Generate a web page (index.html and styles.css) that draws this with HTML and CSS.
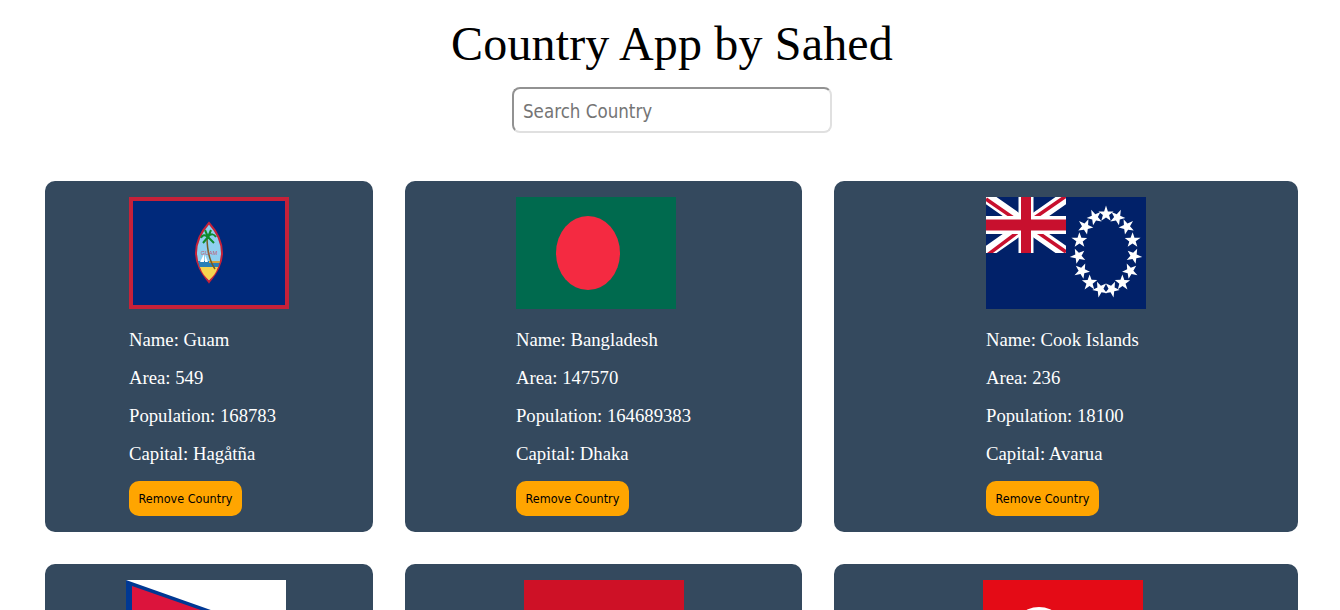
FILE: index.html
```html
<!DOCTYPE html>
<html lang="en">
<head>
  <meta charset="UTF-8" />
  <title>Country App by Sahed</title>
  <meta name="viewport" content="width=device-width, initial-scale=1.0" />
  <link rel="stylesheet" href="styles.css">
</head>
<body>
  <div class="header">
    <h1>Country App by Sahed</h1>
    <input type="text" placeholder="Search Country" />
  </div>

  <div class="countries">
    <div class="card">
      <div class="info">
        <svg class="flag" viewBox="0 0 160 112">
          <rect width="160" height="112" fill="#c62139"/>
          <rect x="4" y="4" width="152" height="104" fill="#00297b"/>
          <g transform="translate(1 0)">
            <path d="M79 26 C 70 36 66 46 66 56 C 66 67 72 76 79 85 C 86 76 92 67 92 56 C 92 46 88 36 79 26 Z" fill="#8fd0f0" stroke="#c62139" stroke-width="2"/>
            <path d="M70 70 H88 C 86 76 83 80 79 83 C 75 80 72 76 70 70 Z" fill="#f6d44f"/>
            <path d="M68 64 H90 L88.500 70 H69.500 Z" fill="#2a80b8"/>
            <path d="M79 64 H90 L89.500 66 H79 Z" fill="#d8a03a"/>
            <path d="M77 39 C 77 50 78 62 85 72" fill="none" stroke="#7a5a20" stroke-width="1.500"/>
            <path d="M78 40 C 75 37 72 38 71 41 M78 40 C 81 36 84 37 86 40 M78 40 L75 33 M78 40 L81 33 M78 40 L73 46 M78 40 L84 46" fill="none" stroke="#108a2c" stroke-width="2"/>
            <path d="M74 57 V65 H70 Z M75 58 L78 65 H75 Z" fill="#fff"/>
            <text x="79" y="58" class="seal-text">GUAM</text>
          </g>
        </svg>
        <p>Name: Guam</p>
        <p>Area: 549</p>
        <p>Population: 168783</p>
        <p>Capital: Hagåtña</p>
        <button>Remove Country</button>
      </div>
    </div>

    <div class="card">
      <div class="info">
        <svg class="flag" viewBox="0 0 160 112">
          <rect width="160" height="112" fill="#006a4e"/>
          <ellipse cx="72" cy="56" rx="32" ry="37" fill="#f42a41"/>
        </svg>
        <p>Name: Bangladesh</p>
        <p>Area: 147570</p>
        <p>Population: 164689383</p>
        <p>Capital: Dhaka</p>
        <button>Remove Country</button>
      </div>
    </div>

    <div class="card">
      <div class="info">
        <svg class="flag" viewBox="0 0 160 112">
          <defs>
            <polygon id="star" points="0,-8.400 1.900,-2.600 7.600,-2.500 3.100,1.100 4.700,6.700 0,3.500 -4.700,6.700 -3.100,1.100 -7.600,-2.500 -1.900,-2.600"/>
          </defs>
          <rect width="160" height="112" fill="#012169"/>
          <svg width="80" height="56">
            <path d="M0 0 L80 56 M80 0 L0 56" stroke="#fff" stroke-width="12"/>
            <path d="M0 2 L36 27 M80 -1 L44 24 M0 59 L36 32 M80 55 L44 30" stroke="#c8102e" stroke-width="3.500"/>
            <path d="M40 0 V56" stroke="#fff" stroke-width="15"/>
            <path d="M0 28 H80" stroke="#fff" stroke-width="18"/>
            <path d="M40 0 V56" stroke="#c8102e" stroke-width="10"/>
            <path d="M0 28 H80" stroke="#c8102e" stroke-width="11"/>
          </svg>
          <g fill="#fff">
            <use href="#star" transform="translate(120 17)"/>
            <use href="#star" transform="translate(131.400 20.300) rotate(24)"/>
            <use href="#star" transform="translate(140.800 29.600) rotate(48)"/>
            <use href="#star" transform="translate(146.600 43.300) rotate(72)"/>
            <use href="#star" transform="translate(147.900 59) rotate(96)"/>
            <use href="#star" transform="translate(144.200 74) rotate(120)"/>
            <use href="#star" transform="translate(136.500 85.700) rotate(144)"/>
            <use href="#star" transform="translate(125.800 92.200) rotate(168)"/>
            <use href="#star" transform="translate(114.200 92.200) rotate(192)"/>
            <use href="#star" transform="translate(103.500 85.700) rotate(216)"/>
            <use href="#star" transform="translate(95.800 74) rotate(240)"/>
            <use href="#star" transform="translate(92.100 59) rotate(264)"/>
            <use href="#star" transform="translate(93.400 43.300) rotate(288)"/>
            <use href="#star" transform="translate(99.200 29.600) rotate(312)"/>
            <use href="#star" transform="translate(108.600 20.300) rotate(336)"/>
          </g>
        </svg>
        <p>Name: Cook Islands</p>
        <p>Area: 236</p>
        <p>Population: 18100</p>
        <p>Capital: Avarua</p>
        <button>Remove Country</button>
      </div>
    </div>

    <div class="card">
      <div class="info">
        <svg class="flag" viewBox="0 0 160 112">
          <rect width="160" height="112" fill="#fff"/>
          <path d="M0 0 L130 46 H56 L130 112 H0 Z" fill="#003893"/>
          <path d="M6 6 L109 42 H42 L112 106 H6 Z" fill="#dc143c"/>
        </svg>
        <p>Name: Nepal</p>
        <p>Area: 147181</p>
        <p>Population: 29136808</p>
        <p>Capital: Kathmandu</p>
        <button>Remove Country</button>
      </div>
    </div>

    <div class="card">
      <div class="info">
        <svg class="flag" viewBox="0 0 160 112">
          <rect width="160" height="112" fill="#fff"/>
          <rect width="160" height="56" fill="#ce1126"/>
        </svg>
        <p>Name: Monaco</p>
        <p>Area: 2.02</p>
        <p>Population: 39244</p>
        <p>Capital: Monaco</p>
        <button>Remove Country</button>
      </div>
    </div>

    <div class="card">
      <div class="info">
        <svg class="flag" viewBox="0 0 160 112">
          <rect width="160" height="112" fill="#e40b16"/>
          <ellipse cx="56" cy="56" rx="29" ry="29" fill="#fff"/>
        </svg>
        <p>Name: Tunisia</p>
        <p>Area: 163610</p>
        <p>Population: 11818618</p>
        <p>Capital: Tunis</p>
        <button>Remove Country</button>
      </div>
    </div>
  </div>
</body>
</html>
```

FILE: styles.css
```css
* {
  box-sizing: border-box;
}

body {
  margin: 0;
  font-family: "Liberation Serif", serif;
  background: #fff;
}

.header {
  display: flex;
  flex-direction: column;
  align-items: center;
  padding: 16px 0 48px 4px;
}

h1 {
  margin: 0 0 15px;
  font-size: 48px;
  font-weight: normal;
  line-height: 56px;
  letter-spacing: 0.16px;
}

.header input {
  width: 320px;
  height: 46px;
  padding: 3px 9px 0;
  border: 2px solid;
  border-color: #929292 #e0e0e0 #e0e0e0 #929292;
  border-radius: 8px;
  font-family: "DejaVu Sans Condensed", "DejaVu Sans", sans-serif;
  font-size: 18.600px;
}

.countries {
  display: grid;
  grid-template-columns: 328px 397px 464px;
  gap: 32px;
  padding: 0 0 32px 45px;
}

.card {
  display: flex;
  justify-content: center;
  padding: 16px;
  background: #34495e;
  border-radius: 10px;
  color: #fff;
}

.info {
  min-width: 160px;
}

.flag {
  display: block;
  width: 160px;
  height: 112px;
  margin-bottom: 20px;
}

.seal-text {
  font-family: "Liberation Sans", sans-serif;
  font-size: 5.500px;
  fill: #c05c70;
  text-anchor: middle;
}

.info p {
  margin: 0 0 17px;
  font-size: 18.720px;
  line-height: 21px;
}

.info button {
  display: block;
  width: 113px;
  height: 35px;
  padding: 0;
  background: #ffa500;
  border: none;
  border-radius: 10px;
  color: #000;
  font-family: "DejaVu Sans Condensed", "DejaVu Sans", sans-serif;
  font-size: 12.500px;
}
```
